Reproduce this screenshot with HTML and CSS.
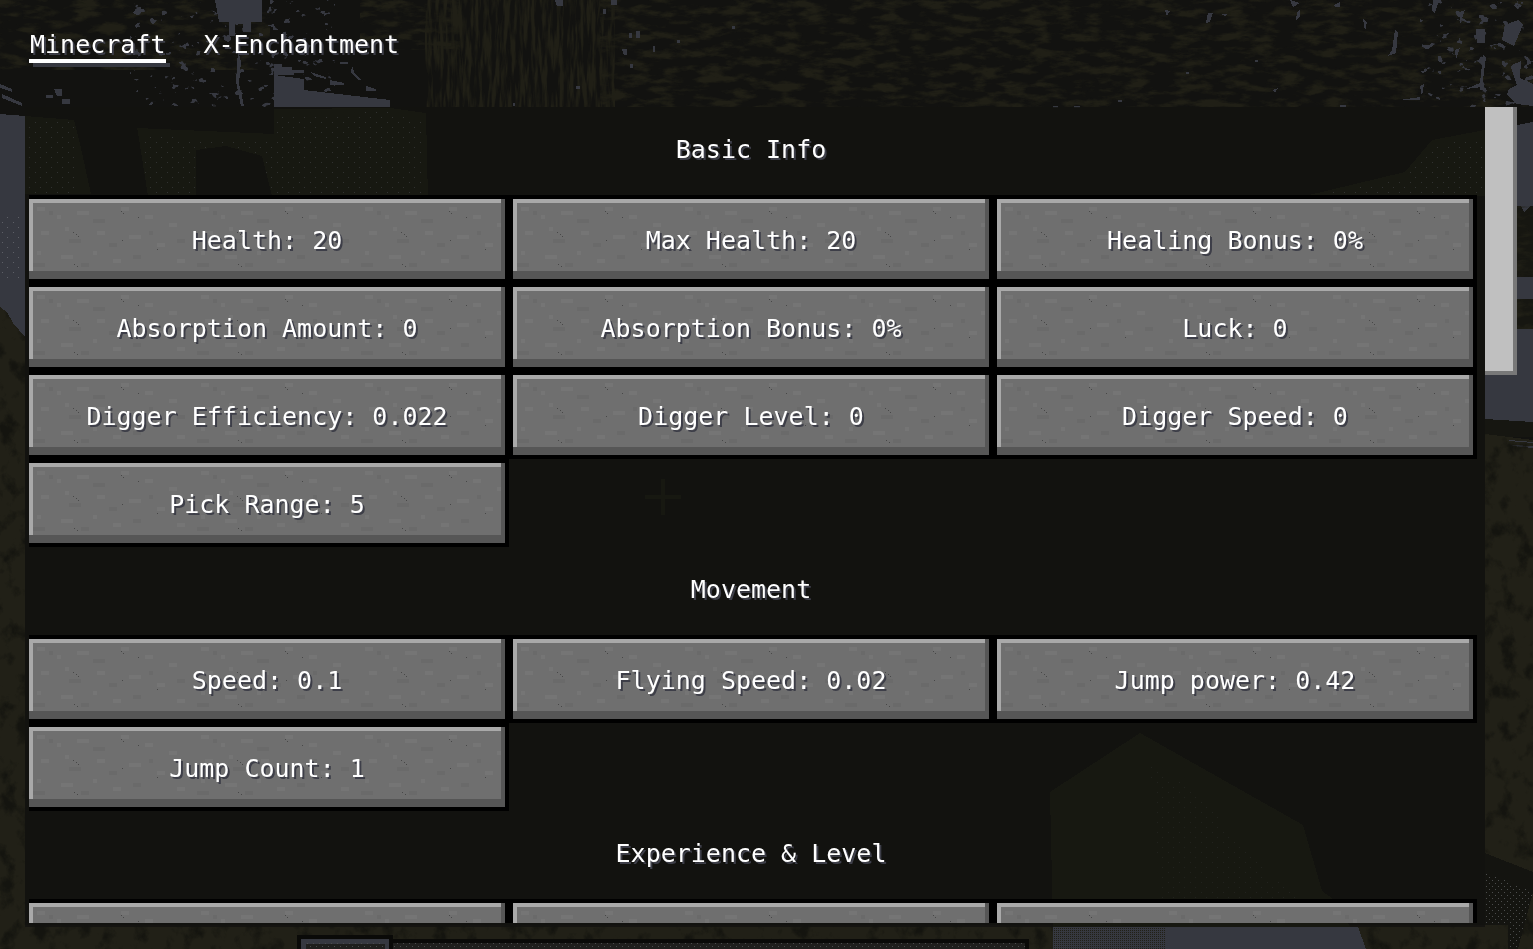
FILE: index.html
```html
<!DOCTYPE html>
<html lang="en">
<head>
    <meta charset="UTF-8">
    <meta name="viewport" content="width=device-width, initial-scale=1.0">
    <title>Attributes</title>
    <link rel="stylesheet" href="styles.css">
</head>
<body>
    <!-- World behind the screen -->
    <svg class="world" viewBox="0 0 1533 949" preserveAspectRatio="none" aria-hidden="true">
        <defs>
            <filter id="moss" x="0" y="0" width="100%" height="100%" color-interpolation-filters="sRGB">
                <feTurbulence type="fractalNoise" baseFrequency="0.04 0.12" numOctaves="5" seed="4"/>
                <feColorMatrix values="0 0 0 0 0.125  0 0 0 0 0.122  0 0 0 0 0.086  4 0 0 0 -1.8"/>
                <feComposite in2="SourceGraphic" operator="in"/>
            </filter>
            <filter id="bark" x="0" y="0" width="100%" height="100%" color-interpolation-filters="sRGB">
                <feTurbulence type="fractalNoise" baseFrequency="0.25 0.03" numOctaves="3" seed="9"/>
                <feColorMatrix values="0 0 0 0 0.125  0 0 0 0 0.122  0 0 0 0 0.086  4 0 0 0 -1.6"/>
                <feComposite in2="SourceGraphic" operator="in"/>
            </filter>
            <filter id="gaps" x="0" y="0" width="100%" height="100%" color-interpolation-filters="sRGB">
                <feTurbulence type="fractalNoise" baseFrequency="0.09 0.12" numOctaves="3" seed="12"/>
                <feColorMatrix values="0 0 0 0 0.212  0 0 0 0 0.22  0 0 0 0 0.25  0 30 0 0 -20"/>
                <feComposite in2="SourceGraphic" operator="in"/>
            </filter>
            <filter id="shade" x="0" y="0" width="100%" height="100%" color-interpolation-filters="sRGB">
                <feTurbulence type="fractalNoise" baseFrequency="0.06 0.05" numOctaves="5" seed="21"/>
                <feColorMatrix values="0 0 0 0 0.08  0 0 0 0 0.08  0 0 0 0 0.06  4 0 0 0 -2.1"/>
                <feComposite in2="SourceGraphic" operator="in"/>
            </filter>
            <pattern id="dots" width="6" height="6" patternUnits="userSpaceOnUse">
                <path fill="#4b4c4c" d="M1 1h1v1H1zM4 4h1v1H4z"/>
            </pattern>
            <pattern id="sparse" width="11" height="10" patternUnits="userSpaceOnUse">
                <path fill="#b8bac0" d="M2 2h1v1H2zM7 7h1v1H7z"/>
            </pattern>
            <pattern id="check" width="2" height="2" patternUnits="userSpaceOnUse">
                <path fill="#212017" d="M0 0h1v1H0z"/>
            </pattern>
        </defs>

        <rect width="1533" height="949" fill="#121210"/>

        <!-- canopy -->
        <rect width="270" height="70" fill="#fff" filter="url(#moss)"/>
        <rect x="360" width="100" height="50" fill="#fff" filter="url(#moss)"/>
        <rect x="425" width="190" height="107" fill="#fff" filter="url(#bark)"/>
        <rect x="600" width="933" height="107" fill="#fff" filter="url(#moss)"/>
        <rect x="130" width="205" height="107" fill="#fff" filter="url(#gaps)"/>
        <rect x="1420" width="113" height="107" fill="#fff" filter="url(#gaps)"/>
        <g fill="#363840">
            <path d="M215 0h47v22h-11v10h-8v-8h-8v12h-6v-14h-10z"/>
            <path d="M274 75l30 4v11l86 10v7H274z"/>
            <path d="M274 64h8v3h10v3h12v3h-10v2h-20zM0 84l12 5v3L0 88zM2 94l20 9v3L2 98zM46 95h7v3h-7zM54 89h8v7h-5zM62 99h8v5h-8z"/>
            <path d="M238 50l3 12-2 22 5 22h-3l-5-24zM310 72l16 5v2l-12-3zM330 80l14 3v2h-14zM352 66l3 8 6 6h-3l-7-7zM366 86l10 3v2h-10zM340 62h8v2h-8z"/>
            <path d="M555 0h8v6h-6zM611 0h6v5h-6zM603 9h3v5h-3zM629 33h3v5h-3zM636 31h4v7h-4zM622 49h5v6h-3zM653 46h2v6h-2zM630 64h3v4h-3zM576 86h4v3h-4zM732 26h3v3h-3zM677 40h3v3h-3zM513 103h2v3h-2z"/>
            <path d="M1290 0l10 3-7 4zM1297 12l3-3v8l-4 3zM1334 5l6-3v5h-5zM1363 19l4 3-2 9zM1395 30l3 2-2 21-8 3 4-6zM1433 0h6l-4 13-3-2zM1460 12l5-2-5 14zM1476 29h9v14h-8zM1483 55l3 2-4 30-16 2 14-6zM1505 25l13-5 5 5-9 21-12-6zM1512 65l9-4-1 17 13 6v22l-16-2-10-9 2-6 8-4-6-18zM1455 50l5-2-4 12zM1420 86l4-2-2 12zM1400 100l20-3v3zM1340 107h6v-2h-6z"/>
            <path d="M1208 13h5l-3 9-4 1zM1165 10l5 1-3 5zM1221 14h7l-3 2zM1255 60h3v2h-3zM1273 90l5-2-3 5zM1186 72h3v2h-3zM1053 106h5v2h-5zM1074 106h6v2h-6zM1118 100h4v2h-4z"/>
        </g>

        <!-- walls seen through the panel -->
        <path fill="#2e331b" d="M25 116l49 4 6 24 11 50H25zM136 128l138 6v-25l116-1 36 5 2 87H146z"/>
        <rect x="26" y="122" width="48" height="72" fill="url(#sparse)"/>
        <path fill="url(#sparse)" d="M140 136l134 6v-28l116-2 34 8v74H148z"/>
        <path fill="#121210" d="M196 150l30-4 36 10 10 40h-76zM74 120h62l12 76H94z"/>
        <path fill="#2e331b" d="M1432 140l53-10v66h-180l100-24z"/>
        <path fill="url(#sparse)" d="M1430 144l55-6v56h-160l80-16z"/>

        <!-- sky and trees at the sides -->
        <path fill="#363840" d="M0 114l25 2v221H0z"/>
        <rect x="0" y="215" width="24" height="65" fill="url(#sparse)" opacity="0.3"/>
        <path fill="#212017" d="M0 307l7 5 6 11 12 14v612H0z"/>
        <path fill="#fff" filter="url(#shade)" d="M0 307l7 5 6 11 12 14v612H0z"/>
        <path fill="#363840" d="M1485 124l32 1 16-3v302h-48z"/>
        <path fill="#161611" d="M1517 206h4l3 6 6-6h3v71h-16zM1517 299h16v30h-16zM1485 419l48 3v15h-48z"/>
        <path fill="#fff" filter="url(#moss)" d="M1517 206h16v71h-16zM1517 299h16v30h-16z"/>
        <path fill="#212017" d="M1485 434l48 6v509h-48z"/>
        <path fill="#363840" d="M1509 440l24 2v1l-24-2zM1512 445l21 1v2l-21-2z"/>
        <path fill="#fff" filter="url(#shade)" d="M1485 434h48v515h-48z"/>

        <!-- ground -->
        <rect y="925" width="1533" height="24" fill="#212017"/>
        <rect y="925" width="1533" height="24" fill="#fff" filter="url(#shade)"/>
        <path fill="#2e331b" d="M1050 792l90-59 163 92 19 66 14 10 14 26H1053z"/>
        <path fill="url(#sparse)" opacity="0.4" d="M1150 766l40 20 80 90 60 40h-168z"/>
        <path fill="#363840" d="M1053 927h305l8 22h-313z"/>
        <path fill="url(#check)" d="M1053 927h112v22h-112z"/>
        <path fill="#141410" d="M1485 853l48 19v20l-15 57h-10v-24h-23z"/>
        <path fill="url(#dots)" d="M1485 872l48 20-15 57h-10v-24h-23z"/>

        <!-- crosshair -->
        <path fill="#2e331b" d="M645 495h16v-16h4v16h16v4h-16v16h-4v-16h-16z"/>

        <!-- hotbar -->
        <path fill="#0a0a08" d="M297 935h96v4h636v10H297z"/>
        <path fill="#363840" d="M301 939h88v10h-88z"/>
        <path fill="#1f1f1d" d="M306 944h79v5h-79zM393 943h632v6H393z"/>
        <path fill="url(#dots)" d="M305 943h80v6h-80zM393 943h632v4H393z"/>
    </svg>

    <nav class="tabs">
        <a href="#minecraft" class="tab active">Minecraft</a>
        <a href="#x-enchantment" class="tab">X-Enchantment</a>
    </nav>

    <main class="panel">
        <div class="list">
            <h2>Basic Info</h2>
            <button class="entry">Health: 20</button>
            <button class="entry">Max Health: 20</button>
            <button class="entry">Healing Bonus: 0%</button>
            <button class="entry">Absorption Amount: 0</button>
            <button class="entry">Absorption Bonus: 0%</button>
            <button class="entry">Luck: 0</button>
            <button class="entry">Digger Efficiency: 0.022</button>
            <button class="entry">Digger Level: 0</button>
            <button class="entry">Digger Speed: 0</button>
            <button class="entry">Pick Range: 5</button>

            <h2>Movement</h2>
            <button class="entry">Speed: 0.1</button>
            <button class="entry">Flying Speed: 0.02</button>
            <button class="entry">Jump power: 0.42</button>
            <button class="entry">Jump Count: 1</button>

            <h2>Experience &amp; Level</h2>
            <button class="entry"></button>
            <button class="entry"></button>
            <button class="entry"></button>
        </div>
        <div class="scroll-thumb"></div>
    </main>
</body>
</html>
```
FILE: styles.css
```css
* {
    box-sizing: border-box;
}

body {
    margin: 0;
    height: 100vh;
    display: flex;
    flex-direction: column;
    overflow: hidden;
    background: #121210;
    color: #fff;
    font-family: "DejaVu Sans Mono", monospace;
    font-size: 25px;
    line-height: 28px;
    text-shadow: 2px 2px #3d3e48;
}

.world {
    position: fixed;
    inset: 0;
    z-index: -1;
    width: 100%;
    height: 100%;
    shape-rendering: crispEdges;
}

/* Tabs */
.tabs {
    display: flex;
    flex: none;
    align-items: flex-start;
    gap: 36px;
    height: 107px;
    padding: 31px 29px;
}

.tab {
    padding: 0 1px;
    color: #fff;
    text-decoration: none;
    border-bottom: 4px solid transparent;
}

.tab.active {
    border-color: #fff;
}

/* Shadow of the underline */
.tab.active::after {
    content: "";
    display: block;
    height: 4px;
    margin: 4px -5px -8px 3px;
    background: #363840;
}

/* Main panel */
.panel {
    display: flex;
    flex: 1;
    min-height: 0;
    margin: 0 16px 22px 25px;
}

.list {
    flex: 1;
    display: grid;
    grid-template-columns: repeat(3, 1fr);
    grid-auto-rows: 80px;
    gap: 8px;
    overflow: clip;
    padding: 4px 12px 0 0;
    border: solid transparent;
    border-width: 0 0 4px 4px;
    background: rgba(18, 18, 16, 0.82) border-box;
}

h2 {
    grid-column: 1 / -1;
    margin: 0;
    padding-top: 25px;
    font-size: 25px;
    font-weight: normal;
    text-align: center;
}

/* Stone buttons */
.entry {
    padding: 4px 0 0;
    border: 0;
    background: #6f6f6f url("data:image/svg+xml,%3Csvg xmlns='http://www.w3.org/2000/svg' width='164' height='84' shape-rendering='crispEdges'%3E%3Cpath fill='%23757575' d='M8 8h8v4H8zM28 16h4v4h-4zM48 12h12v4H48zM92 8h8v4h-8zM116 16h8v4h-8zM140 24h8v4h-8zM12 32h8v4h-8zM36 28h4v4h-4zM68 32h8v4h-8zM100 36h12v4h-12zM128 44h8v4h-8zM8 52h4v4H8zM32 56h12v4H32zM64 52h4v4h-4zM84 60h8v4h-8zM148 60h8v4h-8z'/%3E%3Cpath fill='%236a6a6a' d='M20 12h4v4h-4zM64 20h12v4H64zM40 40h12v4H40zM80 44h8v4h-8zM120 32h4v4h-4zM4 64h12v4H4zM104 56h8v4h-8zM148 40h8v4h-8zM52 64h8v4h-8z'/%3E%3Cpath fill='%23484848' d='M44 33h1v1h-1zM47 35h1v1h-1zM49 37h1v1h-1zM92 12h1v1h-1zM94 14h1v1h-1zM93 41h1v1h-1zM128 50h1v1h-1zM45 65h1v1h-1zM48 67h1v1h-1zM109 18h1v1h-1z'/%3E%3C/svg%3E");
    box-shadow:
        inset -4px -8px #565656,
        inset 4px 4px #a9a9a9,
        0 0 0 4px #000;
    color: #fff;
    font: inherit;
    text-shadow: inherit;
}

/* Scrollbar */
.scroll-thumb {
    width: 32px;
    height: 268px;
    border: solid #787878;
    border-width: 0 4px 4px 0;
    background: #c0c0c0;
}
```
